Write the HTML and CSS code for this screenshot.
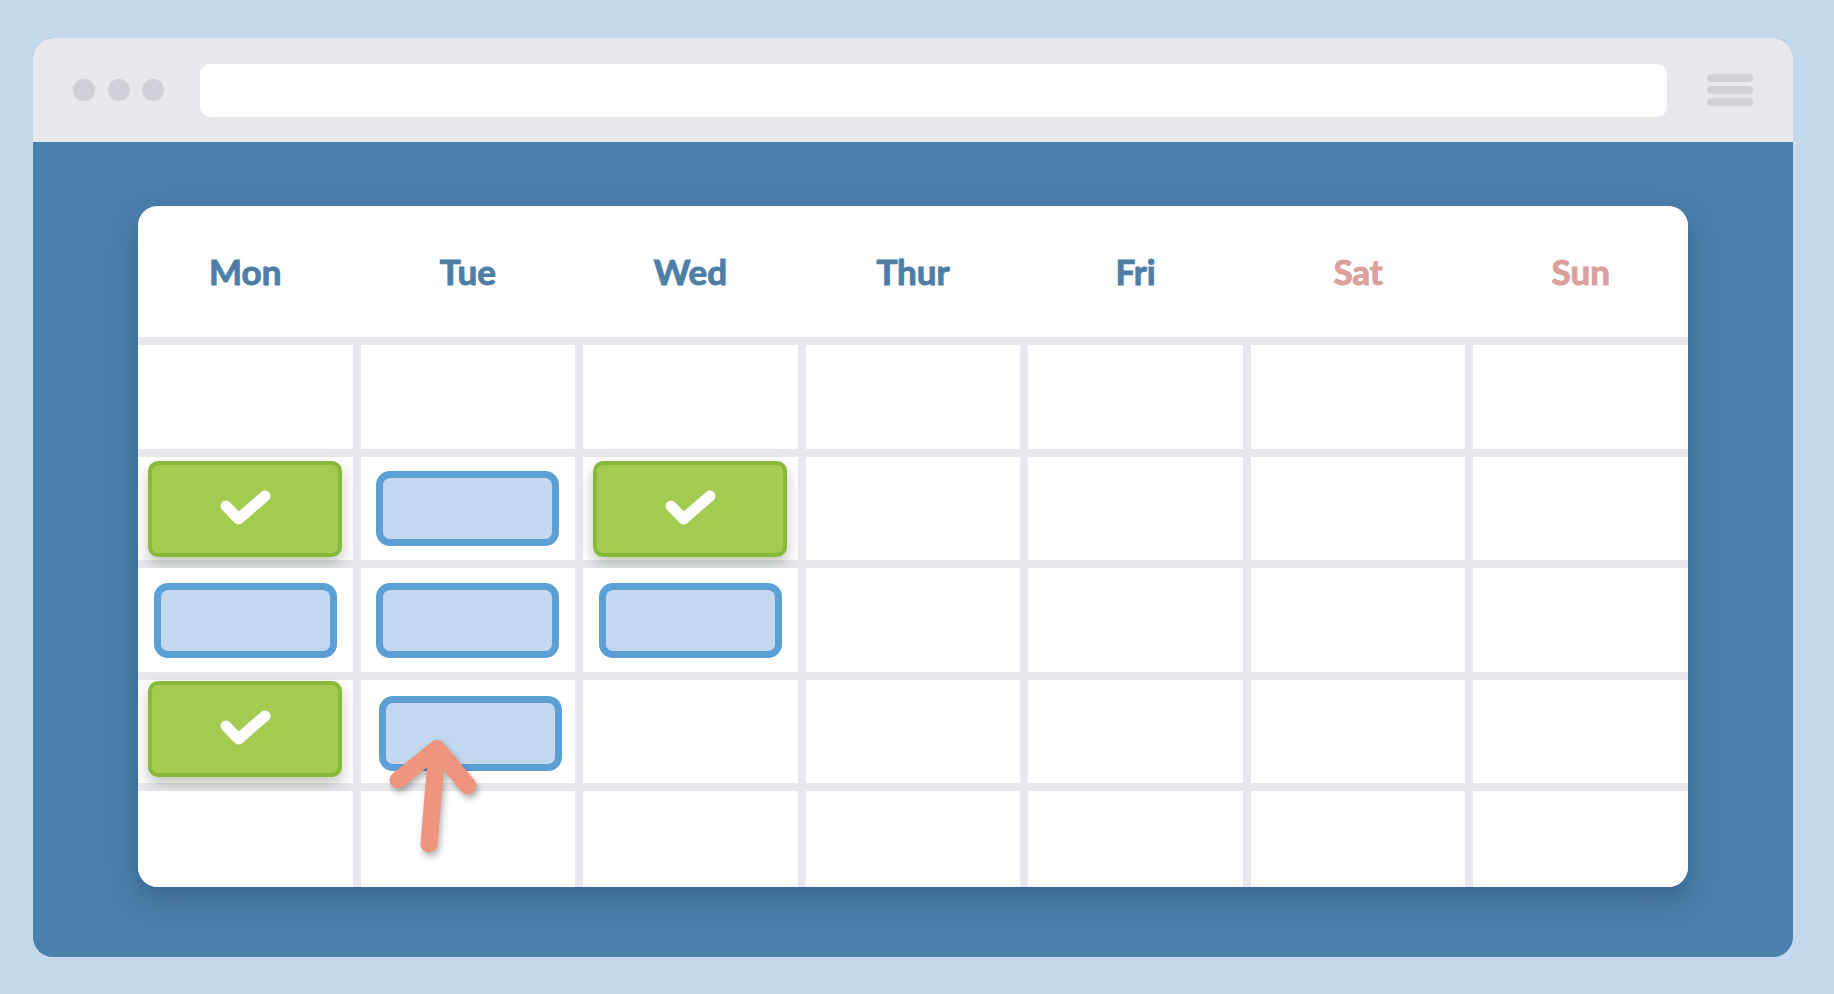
FILE: index.html
```html
<!DOCTYPE html>
<html lang="en">
<head>
  <meta charset="UTF-8" />
  <title>Week planner</title>
  <link rel="stylesheet" href="styles.css">
</head>
<body>

  <div class="window">
    <div class="titlebar">
      <div class="dots"><span></span><span></span><span></span></div>
      <div class="address"></div>
      <div class="burger"><span></span><span></span><span></span></div>
    </div>

    <div class="content">
      <div class="card">
        <div class="days">
          <div class="day">Mon</div>
          <div class="day">Tue</div>
          <div class="day">Wed</div>
          <div class="day">Thur</div>
          <div class="day">Fri</div>
          <div class="day weekend">Sat</div>
          <div class="day weekend">Sun</div>
        </div>

        <div class="grid">
          <!-- row 1 -->
          <div class="cell"></div><div class="cell"></div><div class="cell"></div><div class="cell"></div>
          <div class="cell"></div><div class="cell"></div><div class="cell"></div>
          <!-- row 2 -->
          <div class="cell"><div class="event done">
            <svg viewBox="0 0 56 44" width="56" height="44"><polyline points="9,19 21.5,32 48,9" /></svg>
          </div></div>
          <div class="cell"><div class="event"></div></div>
          <div class="cell"><div class="event done">
            <svg viewBox="0 0 56 44" width="56" height="44"><polyline points="9,19 21.5,32 48,9" /></svg>
          </div></div>
          <div class="cell"></div><div class="cell"></div><div class="cell"></div><div class="cell"></div>
          <!-- row 3 -->
          <div class="cell"><div class="event"></div></div>
          <div class="cell"><div class="event"></div></div>
          <div class="cell"><div class="event"></div></div>
          <div class="cell"></div><div class="cell"></div><div class="cell"></div><div class="cell"></div>
          <!-- row 4 -->
          <div class="cell"><div class="event done up">
            <svg viewBox="0 0 56 44" width="56" height="44"><polyline points="9,19 21.5,32 48,9" /></svg>
          </div></div>
          <div class="cell"><div class="event dragged"></div></div>
          <div class="cell"></div><div class="cell"></div><div class="cell"></div><div class="cell"></div><div class="cell"></div>
          <!-- row 5 -->
          <div class="cell"></div><div class="cell"></div><div class="cell"></div><div class="cell"></div>
          <div class="cell"></div><div class="cell"></div><div class="cell"></div>
        </div>

        <svg class="pointer" viewBox="0 0 110 140" width="110" height="140">
          <path d="M20 54 L59 22.5 L90 60 M59 22.5 L51 118" />
        </svg>
      </div>
    </div>
  </div>

</body>
</html>
```

FILE: styles.css
```css
* { box-sizing: border-box; }
body {
  margin: 0;
  background-color: #c4d9ee;
  font-family: Lato, 'Open Sans', sans-serif;
}
.window {
  margin: 38px 0 0 33px;
  width: 1760px;
  height: 919px;
  border-radius: 20px;
  overflow: hidden;
  background-color: #4c81ad;
  display: flex;
  flex-direction: column;
}
.titlebar {
  height: 104px;
  background-color: #e8e8ee;
  display: flex;
  align-items: center;
  gap: 36px;
  padding: 0 40px;
}
.dots { display: flex; gap: 12.5px; }
.dots span {
  width: 22px;
  height: 22px;
  border-radius: 50%;
  background-color: #d0d1d8;
}
.address {
  flex: 1;
  height: 53px;
  background-color: #fff;
  border-radius: 10px;
  margin-right: 4px;
}
.burger { display: flex; flex-direction: column; gap: 4px; width: 46px; }
.burger span {
  height: 8px;
  border-radius: 4px;
  background-color: #d0d1d8;
}
.content {
  flex: 1;
  padding: 64px 105px 70px;
}
.card {
  position: relative;
  height: 100%;
  background-color: #e8e8ee;
  border-radius: 20px;
  overflow: hidden;
  box-shadow: 0 12px 30px rgba(20, 45, 75, 0.35);
  display: flex;
  flex-direction: column;
}
.days {
  height: 131px;
  background-color: #fff;
  display: grid;
  grid-template-columns: repeat(7, 1fr);
  column-gap: 8px;
  align-items: center;
}
.day {
  text-align: center;
  font-size: 35px;
  font-weight: 700;
  color: #4e7ea8;
  -webkit-text-stroke: 1px #4e7ea8;
  padding-bottom: 2px;
}
.day.weekend { color: #dc9f9c; -webkit-text-stroke-color: #dc9f9c; }
.grid {
  flex: 1;
  margin-top: 8px;
  display: grid;
  grid-template-columns: repeat(7, 1fr);
  grid-template-rows: 104px 103px 104px 103px 1fr;
  gap: 8px;
}
.cell {
  background-color: #fff;
  display: flex;
  align-items: center;
  justify-content: center;
}
.event {
  width: 183px;
  height: 75px;
  border: 7px solid #5b9fd5;
  background-color: #c3d8ee;
  border-radius: 14px;
}
.event.done {
  width: 194px;
  height: 96px;
  border: 4px solid #89b93a;
  background-color: #a3cb50;
  border-radius: 10px;
  box-shadow: 0 7px 14px rgba(40, 60, 20, 0.28);
  display: flex;
  align-items: center;
  justify-content: center;
}
.event.done.up { margin-bottom: 6px; }
.event.dragged { margin: 4px 0 0 5px; }
.event.done svg { fill: none; stroke: #fff; stroke-width: 11; stroke-linecap: round; stroke-linejoin: round; }
.pointer {
  position: absolute;
  left: 240px;
  top: 520px;
  fill: none;
  stroke: #ef957d;
  stroke-width: 17;
  stroke-linecap: round;
  stroke-linejoin: round;
  filter: drop-shadow(2px 4px 3px rgba(0, 0, 0, 0.3));
}
```
